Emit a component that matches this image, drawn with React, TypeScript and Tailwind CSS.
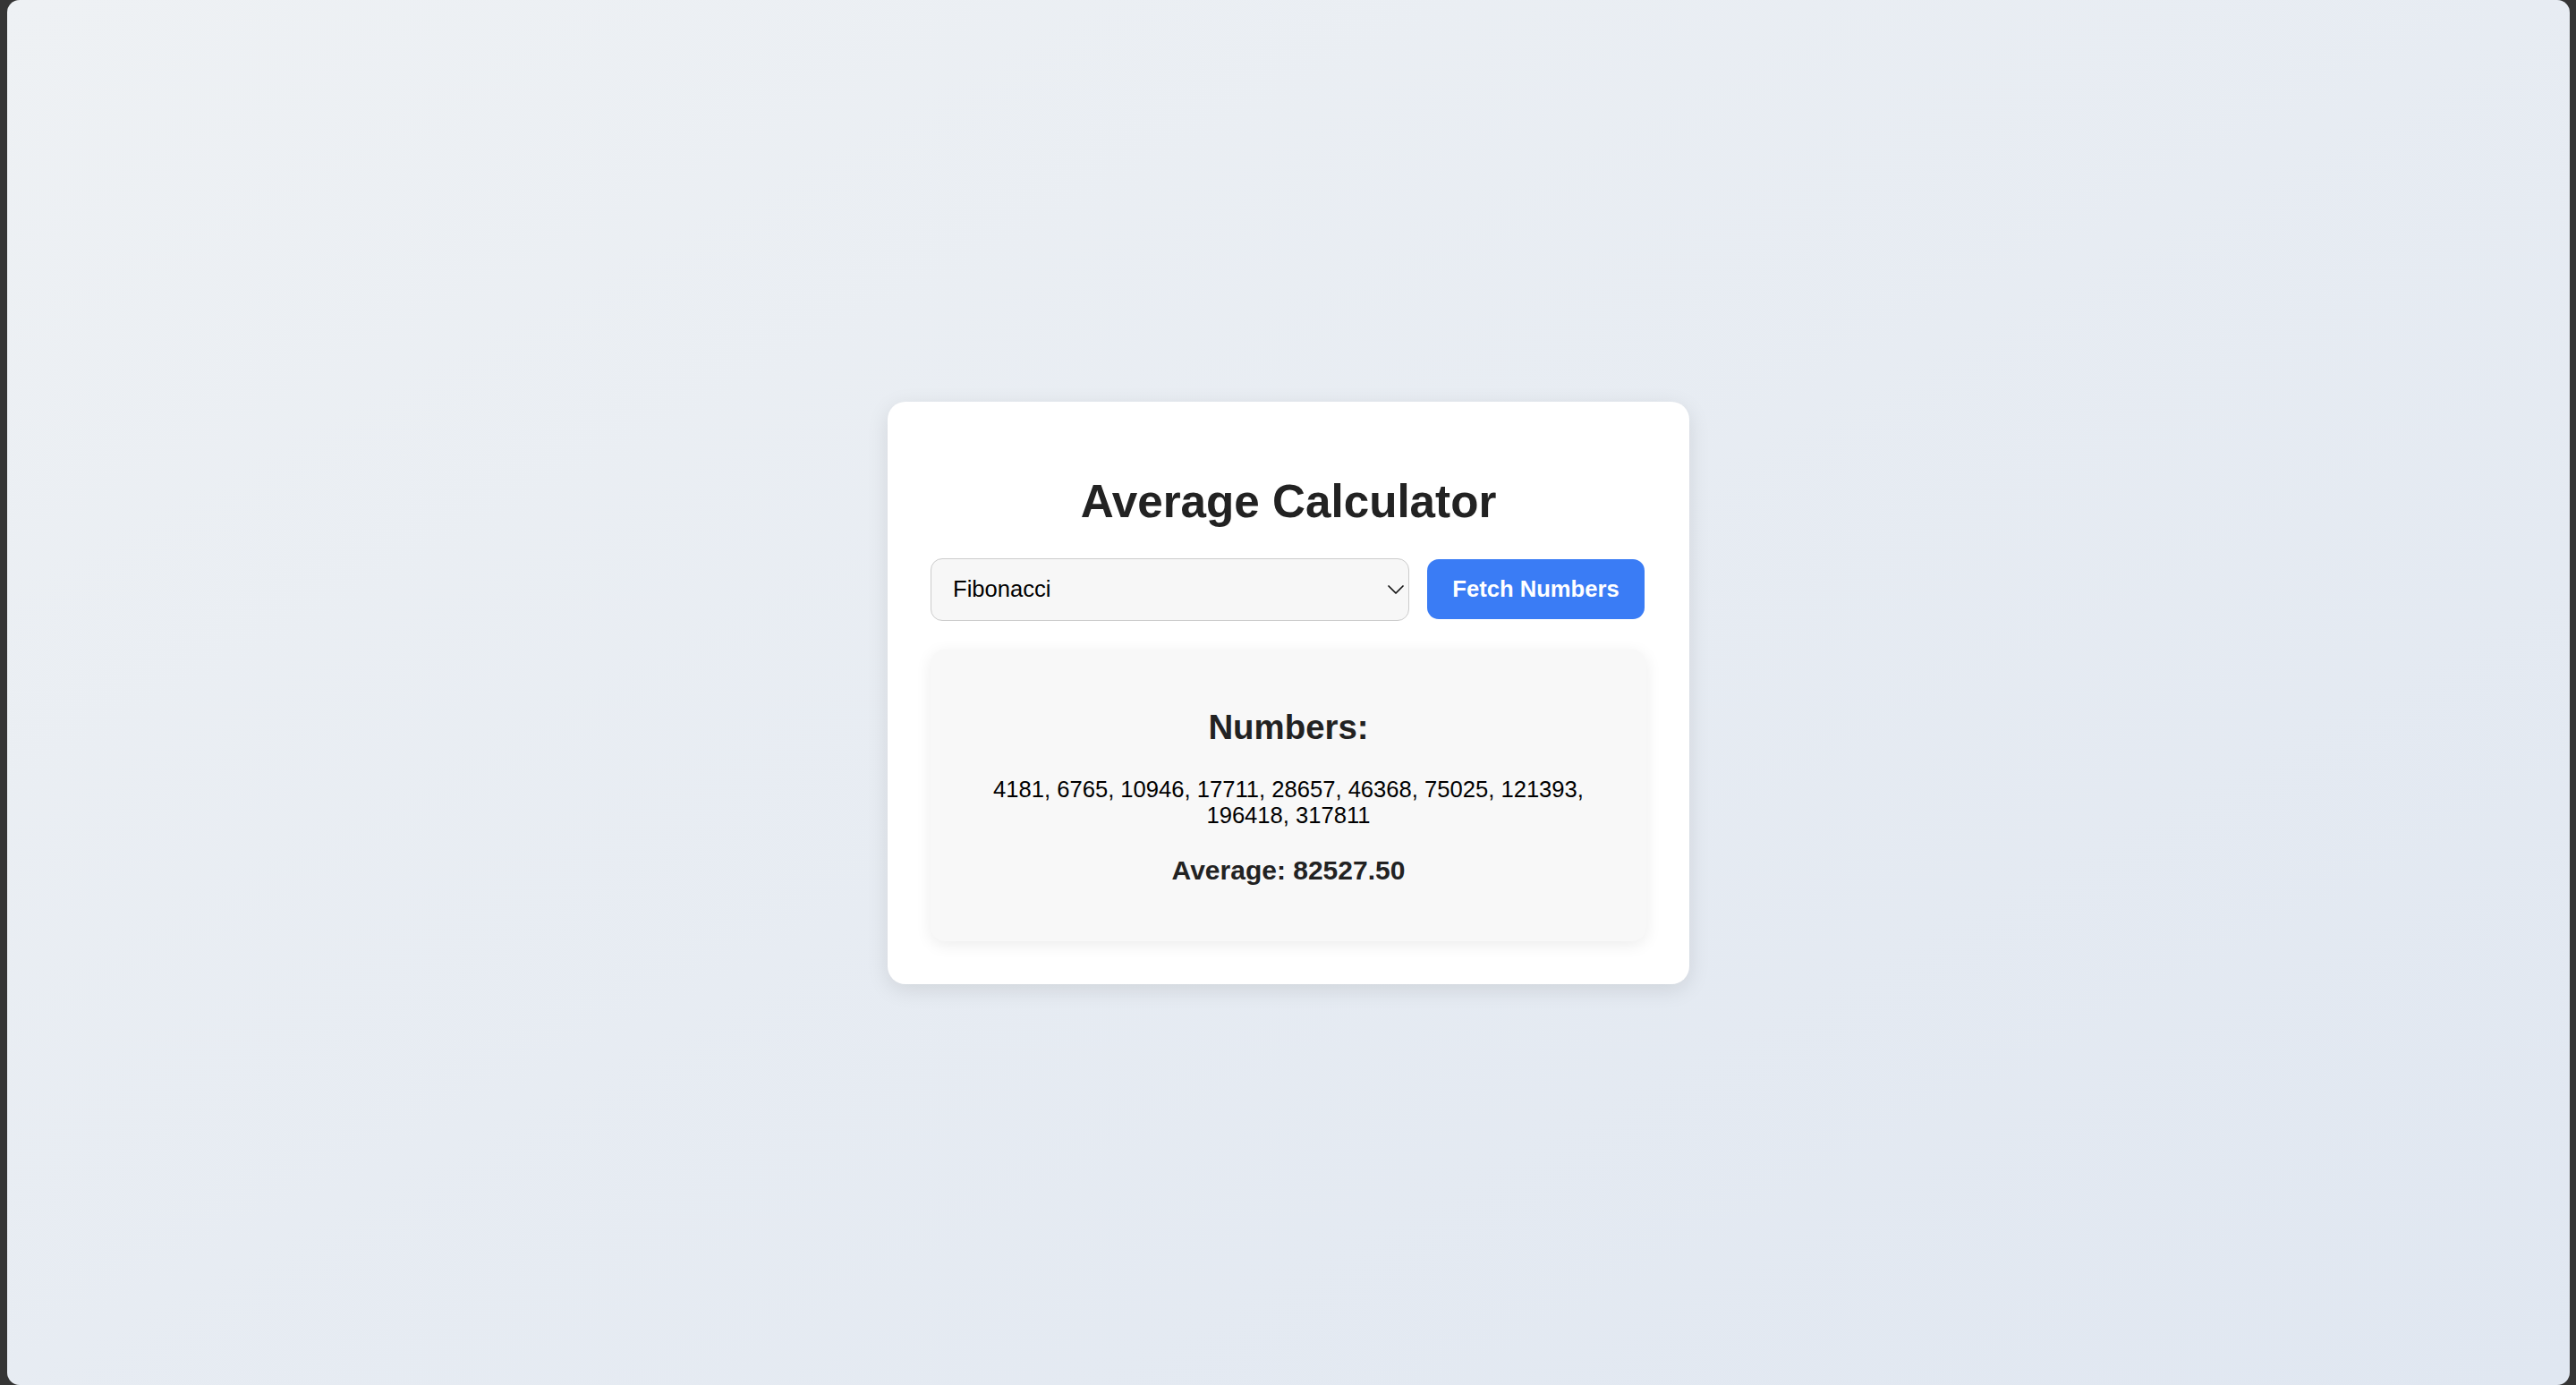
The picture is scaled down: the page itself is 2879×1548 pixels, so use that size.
import { ChevronDown } from "lucide-react";

const numbers = [4181, 6765, 10946, 17711, 28657, 46368, 75025, 121393, 196418, 317811];

export default function App() {
  const average = numbers.reduce((a, b) => a + b, 0) / numbers.length;

  return (
    <div className="h-screen w-full bg-[#353535] pl-[8px] pr-[7px]">
      <div
        className="flex h-full w-full items-center justify-center rounded-[14px] bg-gradient-to-br from-[#eef1f4] to-[#e0e7f1]"
        style={{ fontFamily: '"Liberation Sans", Arial, sans-serif' }}
      >
        <div className="flex w-[896px] flex-col rounded-[20px] bg-white px-[48px] pb-[48px] pt-[48px] shadow-[0_6px_24px_rgba(0,0,0,0.10)]">
          <h1 className="my-[34px] text-center text-[51.2px] font-bold leading-[59px] text-[#222]">
            Average Calculator
          </h1>

          <div className="flex items-center gap-[20px]">
            <div className="relative w-[535px]">
              <select
                defaultValue="fibonacci"
                className="h-[70px] w-full appearance-none rounded-[13px] border border-[#cccccc] bg-[#f7f7f7] pl-[24px] pr-[40px] text-[25.6px] text-black outline-none"
              >
                <option value="prime">Prime</option>
                <option value="fibonacci">Fibonacci</option>
                <option value="even">Even</option>
                <option value="random">Random</option>
              </select>
              <ChevronDown
                className="pointer-events-none absolute right-[-1px] top-1/2 h-[32px] w-[32px] -translate-y-1/2 text-[#111]"
                strokeWidth={1.3}
              />
            </div>
            <button className="h-[67px] w-[243px] rounded-[13px] bg-[#3a7cf5] text-[25.6px] font-bold text-white">
              Fetch Numbers
            </button>
          </div>

          <div className="mt-[32px] flex flex-col items-center rounded-[16px] bg-[#f8f8f8] px-[56px] pb-[62px] pt-[65px] text-center shadow-[0_4px_18px_rgba(0,0,0,0.08)]">
            <h3 className="text-[38.4px] font-bold leading-[44px] text-[#222]">Numbers:</h3>
            <p className="mt-[33px] text-[25.6px] leading-[29px] text-black">{numbers.join(", ")}</p>
            <p className="mt-[30px] text-[30px] font-bold leading-[34px] text-[#222]">
              Average: {average.toFixed(2)}
            </p>
          </div>
        </div>
      </div>
    </div>
  );
}
